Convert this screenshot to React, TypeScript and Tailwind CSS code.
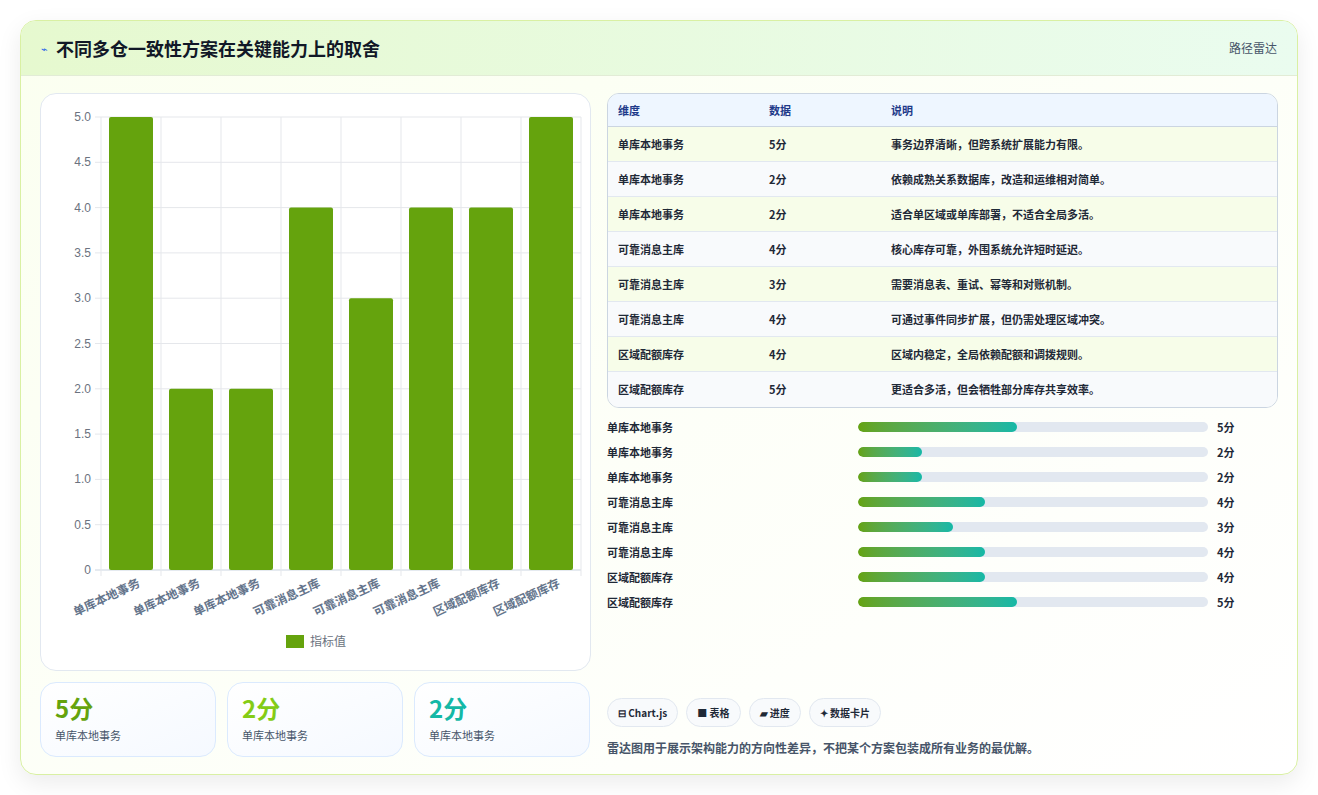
import React from "react";

const rows = [
  ["单库本地事务", 5, "事务边界清晰，但跨系统扩展能力有限。"],
  ["单库本地事务", 2, "依赖成熟关系数据库，改造和运维相对简单。"],
  ["单库本地事务", 2, "适合单区域或单库部署，不适合全局多活。"],
  ["可靠消息主库", 4, "核心库存可靠，外围系统允许短时延迟。"],
  ["可靠消息主库", 3, "需要消息表、重试、幂等和对账机制。"],
  ["可靠消息主库", 4, "可通过事件同步扩展，但仍需处理区域冲突。"],
  ["区域配额库存", 4, "区域内稳定，全局依赖配额和调拨规则。"],
  ["区域配额库存", 5, "更适合多活，但会牺牲部分库存共享效率。"],
] as const;

const font = { fontFamily: '"Noto Sans CJK SC", "Noto Sans", sans-serif' };

function Chart() {
  const x0 = 60, x1 = 540, yTop = 23, yBot = 476;
  const w = (x1 - x0) / 8;
  const ticks = [0, 0.5, 1, 1.5, 2, 2.5, 3, 3.5, 4, 4.5, 5];
  return (
    <svg width="550" height="577" viewBox="0 0 550 577" style={{ fontFamily: '"Liberation Sans", "Noto Sans CJK SC", sans-serif' }}>
      {ticks.map((t) => {
        const y = yBot - (t / 5) * (yBot - yTop);
        return (
          <g key={t}>
            <line x1={x0 - 6} x2={x1} y1={y} y2={y} stroke={t === 0 ? "#cbd5e1" : "#e5e7eb"} />
            <text x={x0 - 10} y={y + 4} textAnchor="end" fontSize="12" fill="#6b7280">{t === 0 ? "0" : t.toFixed(1)}</text>
          </g>
        );
      })}
      {Array.from({ length: 9 }).map((_, i) => (
        <line key={i} x1={x0 + i * w} x2={x0 + i * w} y1={yTop} y2={yBot + 6} stroke="#e5e7eb" />
      ))}
      {rows.map((r, i) => {
        const h = ((r[1] as number) / 5) * (yBot - yTop);
        const bx = x0 + i * w + 8;
        return (
          <g key={i}>
            <rect x={bx} y={yBot - h} width={w - 16} height={h} fill="#65a30d" rx="2" />
            <text x={x0 + i * w + w / 2 + 10} y={yBot + 16} textAnchor="end" fontSize="12" fontWeight="bold" fill="#64748b" transform={`rotate(-25 ${x0 + i * w + w / 2 + 10} ${yBot + 16})`} style={font}>{r[0]}</text>
          </g>
        );
      })}
      <rect x="245" y="541" width="18" height="13" fill="#65a30d" />
      <text x="269" y="552" fontSize="12" fill="#6b7280" style={font}>指标值</text>
    </svg>
  );
}

export default function App() {
  return (
    <div className="w-[1318px] h-[795px] bg-white p-[20px]" style={font}>
      <div className="h-[755px] rounded-2xl border border-[#d9f0a3] bg-gradient-to-br from-[#fbfff0] to-white shadow-[0_8px_24px_rgba(0,0,0,0.08)] overflow-hidden flex flex-col">
        <div className="h-[55px] flex items-center justify-between px-[20px] bg-gradient-to-r from-[#e6f9cf] to-[#eafcef] border-b border-[#e2ecd6]">
          <div className="flex items-center gap-2">
            <span className="text-[#2563eb] text-[11px]">⌁</span>
            <span className="text-[18px] font-bold text-[#111827]">不同多仓一致性方案在关键能力上的取舍</span>
          </div>
          <span className="text-[12px] text-[#475569]">路径雷达</span>
        </div>
        <div className="flex gap-[16px] px-[19px] pt-[17px]">
          <div className="w-[551px] flex flex-col gap-[11px]">
            <div className="h-[578px] rounded-2xl border border-[#e2e8f0] bg-white">
              <Chart />
            </div>
            <div className="flex gap-[11px]">
              {[["5分", "text-[#65a30d]"], ["2分", "text-[#84cc16]"], ["2分", "text-[#14b8a6]"]].map(([v, c], i) => (
                <div key={i} className="w-[176px] h-[75px] rounded-2xl border border-[#dbeafe] bg-gradient-to-br from-white to-[#f5f9ff] px-[14px] pt-[10px]">
                  <div className={`text-[24px] leading-[30px] font-bold ${c}`}>{v}</div>
                  <div className="text-[11px] text-[#475569] mt-[4px]">单库本地事务</div>
                </div>
              ))}
            </div>
          </div>
          <div className="w-[673px] flex flex-col">
            <div className="rounded-xl border border-[#cbd5e1] overflow-hidden text-[11px] font-semibold">
              <div className="flex h-[33px] items-center bg-[#eef6ff] text-[#1e3a8a] border-b border-[#cbd5e1]">
                <div className="w-[161px] pl-[10px]">维度</div>
                <div className="w-[122px]">数据</div>
                <div>说明</div>
              </div>
              {rows.map((r, i) => (
                <div key={i} className={`flex h-[35px] items-center text-[#1f2937] ${i < 7 ? "border-b border-[#e2e8f0]" : ""} ${i % 2 === 0 ? "bg-[#f7fde9]" : "bg-[#f8fafc]"}`}>
                  <div className="w-[161px] pl-[10px]">{r[0]}</div>
                  <div className="w-[122px]">{r[1]}分</div>
                  <div>{r[2]}</div>
                </div>
              ))}
            </div>
            <div className="flex flex-col gap-[11px] mt-[12px]">
              {rows.map((r, i) => (
                <div key={i} className="flex items-center h-[14px] text-[11px] font-semibold text-[#1f2937]">
                  <div className="w-[251px]">{r[0]}</div>
                  <div className="w-[350px] h-[10px] rounded-full bg-[#e2e8f0] overflow-hidden">
                    <div className="h-full rounded-full bg-gradient-to-r from-[#65a30d] to-[#14b8a6]" style={{ width: `${((r[1] as number) / 11) * 100}%` }} />
                  </div>
                  <div className="ml-[9px]">{r[1]}分</div>
                </div>
              ))}
            </div>
            <div className="flex gap-[8px] mt-[89px]">
              {["⊟ Chart.js", "■ 表格", "▰ 进度", "✦ 数据卡片"].map((t) => (
                <div key={t} className="h-[29px] px-[10px] rounded-full border border-[#e2e8f0] bg-[#f8fafc] text-[10px] font-semibold text-[#1f2937] flex items-center">{t}</div>
              ))}
            </div>
            <div className="mt-[12px] text-[12px] font-semibold text-[#475569]">雷达图用于展示架构能力的方向性差异，不把某个方案包装成所有业务的最优解。</div>
          </div>
        </div>
      </div>
    </div>
  );
}
